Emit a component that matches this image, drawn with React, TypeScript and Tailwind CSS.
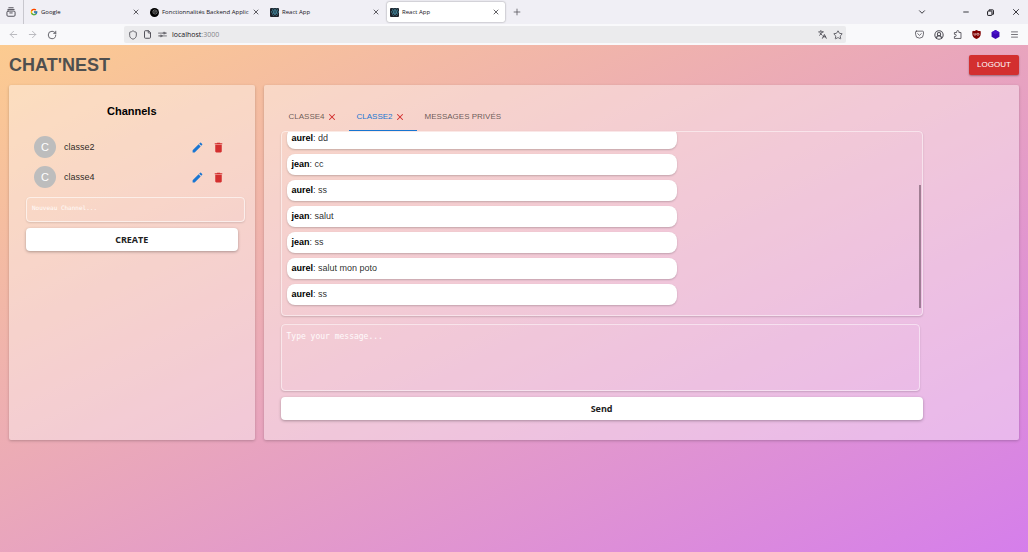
import type { ReactNode } from "react";
import {
  ArrowLeft,
  ArrowRight,
  ChevronDown,
  CircleUserRound,
  File,
  Languages,
  Menu,
  Minus,
  Plus,
  RotateCw,
  Shield,
  Star,
  X,
} from "lucide-react";
import { FcGoogle } from "react-icons/fc";
import { FaReact } from "react-icons/fa";
import { RiOpenaiFill } from "react-icons/ri";
import { MdDelete, MdEdit } from "react-icons/md";

const GoogleMark = () => <FcGoogle className="size-2 shrink-0" />;

const OpenAiMark = () => (
  <span className="flex size-[9px] shrink-0 items-center justify-center rounded-full bg-black text-[#a8a8a8]">
    <RiOpenaiFill className="size-[6px]" />
  </span>
);

const ReactMark = () => (
  <span className="flex size-[9px] shrink-0 items-center justify-center rounded-[1px] bg-[#20232a] text-[#4fb3cf]">
    <FaReact className="size-2" />
  </span>
);

type BrowserTab = { title: string; icon: ReactNode; active?: boolean };

const browserTabs: BrowserTab[] = [
  { title: "Google", icon: <GoogleMark /> },
  { title: "Fonctionnalités Backend Applic", icon: <OpenAiMark /> },
  { title: "React App", icon: <ReactMark /> },
  { title: "React App", icon: <ReactMark />, active: true },
];

function IconButton({ label, children, className = "" }: { label: string; children: ReactNode; className?: string }) {
  return (
    <button type="button" aria-label={label} className={`flex size-[11px] shrink-0 items-center justify-center ${className}`}>
      {children}
    </button>
  );
}

function FirefoxView() {
  return (
    <svg viewBox="0 0 16 16" className="size-[10px]" fill="none" stroke="currentColor" strokeWidth="1.5" strokeLinecap="round">
      <path d="M4.5 1.2h7M3 3.9h10" />
      <rect x="1.5" y="6.5" width="13" height="8.3" rx="1.8" />
      <path d="M6 9.5h4" />
    </svg>
  );
}

function Permissions() {
  return (
    <svg viewBox="0 0 16 12" className="h-[7px] w-[9px]" fill="none" stroke="currentColor" strokeWidth="1.3" strokeLinecap="round">
      <path d="M1 3.5h8M1 8.5h3M12 3.5h3M7 8.5h8" />
      <circle cx="10.8" cy="3.5" r="1.7" />
      <circle cx="5.3" cy="8.5" r="1.7" />
    </svg>
  );
}

function Pocket() {
  return (
    <svg viewBox="0 0 16 16" className="size-[9px]" fill="none" stroke="currentColor" strokeWidth="1.4" strokeLinecap="round" strokeLinejoin="round">
      <path d="M2.5 2h11A1.5 1.5 0 0 1 15 3.5V7.5a7 7 0 0 1-14 0V3.5A1.5 1.5 0 0 1 2.5 2z" />
      <path d="M4.8 6.5 8 9.5l3.2-3" />
    </svg>
  );
}

function Extensions() {
  return (
    <svg viewBox="0 0 16 16" className="size-[9px]" fill="none" stroke="currentColor" strokeWidth="1.5" strokeLinejoin="round">
      <path d="M2.5 15V11.5h1.3a1.9 1.9 0 0 0 0-3.8H2.5V4.5h4V3a2 2 0 0 1 4 0v1.5h3.7V15z" />
    </svg>
  );
}

function BlockerShield() {
  return (
    <svg viewBox="0 0 16 16" className="size-[9px]">
      <path d="M8 0c2.5 1.7 4.8 2 7.5 2v5c0 4.5-3.5 7.5-7.5 9C4 14.5.5 11.5.5 7V2C3.2 2 5.5 1.7 8 0z" fill="#800000" />
      <path d="M3.6 5.5v2.3a1.6 1.6 0 0 0 3.2 0V5.5" fill="none" stroke="#fff" strokeWidth="1.1" />
      <circle cx="10.6" cy="7.6" r="1.9" fill="none" stroke="#fff" strokeWidth="1.1" />
    </svg>
  );
}

function Hexagon() {
  return (
    <svg viewBox="0 0 16 16" className="size-[9px]">
      <path d="M8 0l7 4v8l-7 4-7-4V4z" fill="#3b06b5" />
      <path d="M8 0l7 4-7 4-7-4z" fill="#4a12c9" />
    </svg>
  );
}

function BrowserChrome() {
  return (
    <header className="font-['Open_Sans','Noto_Sans',sans-serif] text-[#15141a]">
      <div className="flex h-6 items-center bg-[#f0eff5]">
        <div className="mr-[3px] flex h-full w-6 shrink-0 items-center border-r border-[#c8c7ce] pl-[5px] text-[#4b4a52]">
          <IconButton label="Recent browsing">
            <FirefoxView />
          </IconButton>
        </div>
        <ul className="flex gap-0.5">
          {browserTabs.map((tab, i) => (
            <li
              key={i}
              className={`flex h-5 w-[118px] items-center rounded-[2px] pr-1 pl-[3px] ${
                tab.active ? "bg-white shadow-[0_0_2px_rgba(0,0,0,0.45)]" : ""
              }`}
            >
              {tab.icon}
              <span className="ml-[3px] min-w-0 flex-1 text-[6px] leading-[10px] font-medium whitespace-nowrap">
                {tab.title}
              </span>
              <IconButton label={`Close ${tab.title}`}>
                <X className="size-2" strokeWidth={2} />
              </IconButton>
            </li>
          ))}
        </ul>
        <IconButton label="New tab" className="ml-[6px] text-[#5b5a62]">
          <Plus className="size-[10px]" strokeWidth={2} />
        </IconButton>
        <div className="ml-auto flex items-center gap-[14px] pr-[7px]">
          <IconButton label="List tabs" className="mr-[19px]">
            <ChevronDown className="size-[10px]" strokeWidth={2} />
          </IconButton>
          <IconButton label="Minimize">
            <Minus className="size-2" strokeWidth={2.5} />
          </IconButton>
          <IconButton label="Restore">
            <svg viewBox="0 0 12 12" className="size-[7px]" fill="none" stroke="currentColor" strokeWidth="1.7">
              <rect x="1" y="3.5" width="7.5" height="7.5" rx="1" />
              <path d="M3.5 3V1.5H10a1 1 0 0 1 1 1V9H9" />
            </svg>
          </IconButton>
          <IconButton label="Close window">
            <X className="size-[10px]" strokeWidth={2} />
          </IconButton>
        </div>
      </div>
      <div className="flex h-[21px] items-center bg-[#f9f9fb] text-[#4b4a52]">
        <nav className="flex w-[124px] shrink-0 gap-2 pl-2">
          <IconButton label="Back" className="text-[#b5b5ba]">
            <ArrowLeft className="size-[11px]" />
          </IconButton>
          <IconButton label="Forward" className="text-[#b5b5ba]">
            <ArrowRight className="size-[11px]" />
          </IconButton>
          <IconButton label="Reload">
            <RotateCw className="size-[10px]" strokeWidth={2} />
          </IconButton>
        </nav>
        <div className="flex h-[17px] flex-1 items-center gap-1 rounded-[2px] bg-[#ebebed] px-[3px]">
          <IconButton label="Tracking protection">
            <Shield className="size-[10px]" />
          </IconButton>
          <IconButton label="Page information">
            <File className="size-[9px]" strokeWidth={2.5} />
          </IconButton>
          <IconButton label="Permissions">
            <Permissions />
          </IconButton>
          <p className="flex-1 text-[7px] leading-[10px] text-[#15141a]">
            localhost<span className="text-[#85858a]">:3000</span>
          </p>
          <IconButton label="Translate page">
            <Languages className="size-[9px]" strokeWidth={2.5} />
          </IconButton>
          <IconButton label="Bookmark page">
            <Star className="size-[10px]" />
          </IconButton>
        </div>
        <div className="flex w-[182px] shrink-0 justify-end gap-2 pr-2">
          <IconButton label="Save to Pocket">
            <Pocket />
          </IconButton>
          <IconButton label="Account">
            <CircleUserRound className="size-[10px]" strokeWidth={2.5} />
          </IconButton>
          <IconButton label="Extensions">
            <Extensions />
          </IconButton>
          <IconButton label="Content blocker">
            <BlockerShield />
          </IconButton>
          <IconButton label="Wallet">
            <Hexagon />
          </IconButton>
          <IconButton label="Menu">
            <Menu className="size-[9px]" strokeWidth={2} />
          </IconButton>
        </div>
      </div>
    </header>
  );
}

const channels = ["classe2", "classe4"];

function ChannelsPanel() {
  return (
    <section className="rounded-[2px] bg-white/40 px-[17px] pt-[18px] shadow-[0_1px_3px_rgba(0,0,0,0.22)]">
      <h2 className="text-center text-[11px] leading-4 font-bold text-black">Channels</h2>
      <ul className="mt-[13px] px-2">
        {channels.map((name) => (
          <li key={name} className="flex h-[30px] items-center text-[9px] leading-3 text-black/85">
            <span className="flex size-[22px] items-center justify-center rounded-full bg-[#bdbdbd] text-[11px] text-white">
              C
            </span>
            <span className="ml-2 flex-1">{name}</span>
            <button type="button" aria-label={`Edit ${name}`} className="mr-2 text-[#1976d2]">
              <MdEdit className="size-[13px]" />
            </button>
            <button type="button" aria-label={`Delete ${name}`} className="mr-[5px] text-[#d32f2f]">
              <MdDelete className="size-[13px]" />
            </button>
          </li>
        ))}
      </ul>
      <form>
        <div className="-mr-[7px] pt-[5px]">
          <textarea
            aria-label="Nouveau Channel"
            placeholder="Nouveau Channel..."
            className="block h-[25px] w-full resize-none rounded-[4px] border border-white/60 bg-transparent px-[5px] py-[6px] font-['DejaVu_Sans_Mono',monospace] text-[6px] leading-[8px] shadow-[0_1px_2px_rgba(0,0,0,0.12)] placeholder:text-white/90"
          />
        </div>
        <button
          type="button"
          className="mt-[6px] h-[23px] w-full rounded-[4px] bg-white font-['Open_Sans','Noto_Sans',sans-serif] text-[9px] font-bold text-[#212121] shadow-[0_1px_3px_rgba(0,0,0,0.3)]"
        >
          CREATE
        </button>
      </form>
    </section>
  );
}

const rooms = [
  { label: "CLASSE4", closable: true },
  { label: "CLASSE2", closable: true, selected: true },
  { label: "MESSAGES PRIVÉS" },
];

const messages = [
  { author: "aurel", text: "dd" },
  { author: "jean", text: "cc" },
  { author: "aurel", text: "ss" },
  { author: "jean", text: "salut" },
  { author: "jean", text: "ss" },
  { author: "aurel", text: "salut mon poto" },
  { author: "aurel", text: "ss" },
];

function ChatPanel() {
  return (
    <section className="rounded-[2px] bg-white/40 px-[17px] pt-[18px] pb-5 shadow-[0_1px_3px_rgba(0,0,0,0.22)]">
      <div className="w-[89%]">
        <div role="tablist" className="flex h-7">
          {rooms.map((room) => (
            <button
              key={room.label}
              type="button"
              role="tab"
              aria-selected={!!room.selected}
              className={`flex items-center gap-0.5 border-b pl-2 text-[8px] ${room.closable ? "pr-3" : "pr-2"} ${
                room.selected ? "border-[#1976d2] text-[#1976d2]" : "border-transparent text-black/60"
              }`}
            >
              {room.label}
              {room.closable && <X className="size-[10px] text-[#d32f2f]" strokeWidth={2.5} />}
            </button>
          ))}
        </div>
        <div className="relative rounded-[4px] border border-white/50 shadow-[0_1px_2px_rgba(0,0,0,0.16)]">
          <ul className="flex h-[183px] flex-col justify-end gap-[5px] overflow-hidden px-[5px] pb-[10px]">
            {messages.map((m, i) => (
              <li
                key={i}
                className="h-[21px] w-[62%] shrink-0 rounded-[8px] bg-white px-[5px] text-[9px] leading-[21px] text-black/85 shadow-[0_1px_2px_rgba(0,0,0,0.2)]"
              >
                <strong className="text-black">{m.author}</strong>: {m.text}
              </li>
            ))}
          </ul>
          <span className="absolute right-px bottom-[7px] h-[123px] w-[2px] bg-[#6b4f60]/60" />
        </div>
        <form>
          <div className="pt-2 pr-[3px]">
            <textarea
              aria-label="Message"
              placeholder="Type your message..."
              className="block h-[67px] w-full resize-none rounded-[4px] border border-white/50 bg-transparent px-[5px] py-[7px] font-['DejaVu_Sans_Mono',monospace] text-[8px] leading-[10px] shadow-[0_1px_2px_rgba(0,0,0,0.16)] placeholder:text-white/90"
            />
          </div>
          <button
            type="button"
            className="mt-[6px] h-[23px] w-full rounded-[4px] bg-white font-['Open_Sans','Noto_Sans',sans-serif] text-[9px] font-bold text-[#212121] shadow-[0_1px_3px_rgba(0,0,0,0.3)]"
          >
            Send
          </button>
        </form>
      </div>
    </section>
  );
}

export default function App() {
  return (
    <div className="flex min-h-screen flex-col font-['Liberation_Sans',Arial,sans-serif]">
      <BrowserChrome />
      <main className="flex-1 bg-linear-to-br/srgb from-[#fccb90] to-[#d57eeb] px-[9px]">
        <div className="flex h-10 items-center justify-between">
          <h1 className="text-[18px] leading-5 font-bold text-[#4f4f4f]">CHAT'NEST</h1>
          <button
            type="button"
            className="h-5 w-[50px] rounded-[2px] bg-[#d32f2f] text-[8px] text-white shadow-[0_1px_2px_rgba(0,0,0,0.35)]"
          >
            LOGOUT
          </button>
        </div>
        <div className="grid grid-cols-[13fr_40fr] gap-[9px]">
          <ChannelsPanel />
          <ChatPanel />
        </div>
      </main>
    </div>
  );
}
